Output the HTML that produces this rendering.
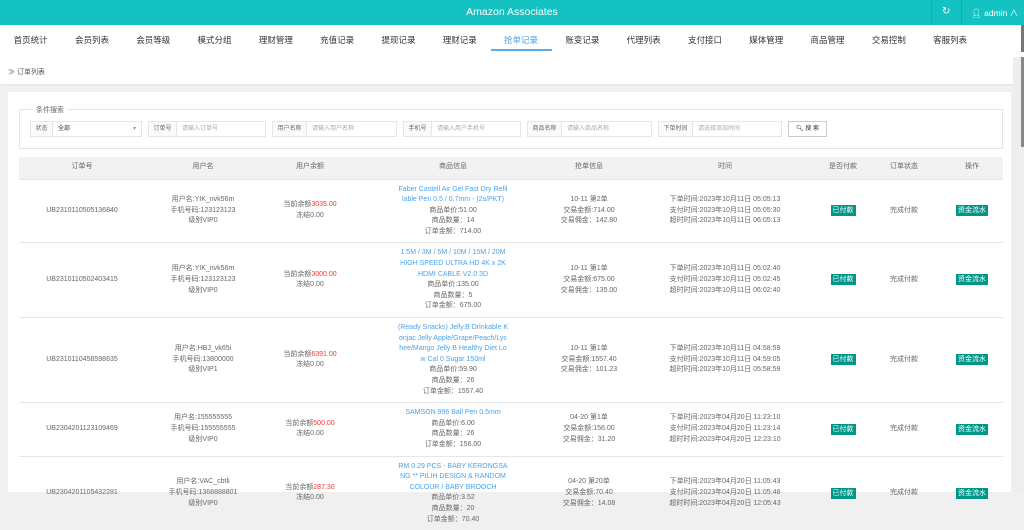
<!DOCTYPE html>
<html><head><meta charset="utf-8"><style>
*{margin:0;padding:0;box-sizing:border-box}
body{width:1024px;height:492px;overflow:hidden;background:#f0f0f0;font-family:"Liberation Sans","Noto Sans CJK SC",sans-serif;color:#666;position:relative}
.hd{position:absolute;left:0;top:0;width:1024px;height:25px;background:#14c2c1;color:#fff}
.hd .t{position:absolute;left:0;width:1024px;top:6px;text-align:center;font-size:10.5px}
.hd .d{position:absolute;top:0;width:1px;height:25px;background:#10aeae}
.nav{position:absolute;left:0;top:25px;width:1024px;height:59px;background:#fff;box-shadow:0 1px 2px rgba(0,0,0,.06)}
.nav .it{position:absolute;top:9px;width:61.3px;text-align:center;font-size:8.5px;color:#333}
.nav .on{color:#4aa3ee}
.ul{position:absolute;left:491px;top:24px;width:61px;height:2px;background:#5aaef0}
.bc{position:absolute;left:8px;top:42px;font-size:7px;color:#555}
.card{position:absolute;left:8px;top:92px;width:1003px;height:400px;background:#fff}
.sb{position:absolute;left:1013px;top:57px;width:11px;height:435px;background:#eee}
.sb2{position:absolute;left:1021px;top:57px;width:3px;height:90px;background:#888}
.fs{position:absolute;left:19px;top:109px;width:984px;height:40px;border:1px solid #e6e6e6}
.lg{position:absolute;left:33px;top:105px;background:#fff;padding:0 3px;font-size:7px;color:#666}
.fi{position:absolute;top:121px;height:16px;border:1px solid #e6e6e6;font-size:6px;color:#aaa;line-height:14px}
.fi b{display:inline-block;height:14px;background:#fafafa;border-right:1px solid #e6e6e6;font-weight:normal;color:#666;text-align:center;float:left}
.fi span{padding-left:5px}
table{position:absolute;left:19px;top:157px;width:984px;border-collapse:collapse;table-layout:fixed;font-size:7px;line-height:10.6px}
th{background:#f2f2f2;height:22px;font-weight:normal;color:#666}
td{text-align:center;padding:5px 0;border-top:1px solid #e6e6e6;white-space:nowrap;vertical-align:middle}
.r{color:#f33}.bl{color:#4aa3ee}
.pd{width:110px;margin:0 auto;white-space:normal;word-break:break-all}
.bg{display:inline-block;background:#009688;color:#fff;padding:0 2px;line-height:11px;height:11px}
</style></head><body>
<div class="hd"><div class="t">Amazon Associates</div>
<div class="d" style="left:931px"></div><div class="d" style="left:961px"></div>
<div style="position:absolute;left:942px;top:6px;font-size:10px">&#x21bb;</div>
<div style="position:absolute;left:971px;top:7px;font-size:8.5px">&#x1F464;&#xFE0E; admin &#x2227;</div></div>
<div class="nav">
<div class="it" style="left:0">首页统计</div><div class="it" style="left:61.3px">会员列表</div><div class="it" style="left:122.6px">会员等级</div><div class="it" style="left:183.9px">模式分组</div><div class="it" style="left:245.2px">理财管理</div><div class="it" style="left:306.5px">充值记录</div><div class="it" style="left:367.8px">提现记录</div><div class="it" style="left:429.1px">理财记录</div><div class="it on" style="left:490.4px">抢单记录</div><div class="it" style="left:551.7px">账变记录</div><div class="it" style="left:613px">代理列表</div><div class="it" style="left:674.3px">支付接口</div><div class="it" style="left:735.6px">媒体管理</div><div class="it" style="left:796.9px">商品管理</div><div class="it" style="left:858.2px">交易控制</div><div class="it" style="left:919.5px">客服列表</div>
<div class="ul"></div>
<div class="bc">&#x226B; 订单列表</div>
<div style="position:absolute;left:1021px;top:0;width:3px;height:27px;background:#777"></div>
</div>
<div class="sb"></div><div class="sb2"></div>
<div class="card"></div>
<div class="fs"></div><div class="lg">条件搜索</div>
<div class="fi" style="left:30px;width:112px"><b style="width:22px">状态</b><span style="color:#333">全部</span><span style="position:absolute;right:5px;color:#999">&#x25BE;</span></div>
<div class="fi" style="left:148px;width:118px"><b style="width:28px">订单号</b><span>请输入订单号</span></div>
<div class="fi" style="left:272px;width:125px"><b style="width:34px">用户名称</b><span>请输入用户名称</span></div>
<div class="fi" style="left:403px;width:118px"><b style="width:28px">手机号</b><span>请输入用户手机号</span></div>
<div class="fi" style="left:527px;width:125px"><b style="width:34px">商品名称</b><span>请输入商品名称</span></div>
<div class="fi" style="left:658px;width:124px"><b style="width:34px">下单时间</b><span>请选择添加时间</span></div>
<div class="fi" style="left:788px;width:39px;color:#333;text-align:center;border-color:#ccc">&#x1F50D;&#xFE0E; 搜 索</div>
<table>
<colgroup><col style="width:126px"><col style="width:116px"><col style="width:98px"><col style="width:188px"><col style="width:84px"><col style="width:188px"><col style="width:48px"><col style="width:74px"><col style="width:62px"></colgroup>
<tr><th>订单号</th><th>用户名</th><th>用户余额</th><th>商品信息</th><th>抢单信息</th><th>时间</th><th>是否付款</th><th>订单状态</th><th>操作</th></tr>
<tr><td>UB2310110505136840</td><td>用户名:YIK_nvk56m<br>手机号码:123123123<br>级别VIP0</td><td>当前余额<span class="r">3035.00</span><br>冻结0.00</td><td><div class="pd"><span class="bl">Faber Castell Air Gel Fast Dry Refillable Pen 0.5 / 0.7mm - (2s/PKT)</span><br>商品单价:51.00<br>商品数量：14<br>订单金额：714.00</div></td><td>10-11 第2单<br>交易金额:714.00<br>交易佣金：142.80</td><td>下单时间:2023年10月11日 05:05:13<br>支付时间:2023年10月11日 05:05:30<br>超时时间:2023年10月11日 06:05:13</td><td><span class="bg">已付款</span></td><td>完成付款</td><td><span class="bg">资金流水</span></td></tr>
<tr><td>UB2310110502403415</td><td>用户名:YIK_nvk56m<br>手机号码:123123123<br>级别VIP0</td><td>当前余额<span class="r">3000.00</span><br>冻结0.00</td><td><div class="pd"><span class="bl">1.5M / 3M / 5M / 10M / 15M / 20M HIGH SPEED ULTRA HD 4K x 2K HDMI CABLE V2.0 3D</span><br>商品单价:135.00<br>商品数量：5<br>订单金额：675.00</div></td><td>10-11 第1单<br>交易金额:675.00<br>交易佣金：135.00</td><td>下单时间:2023年10月11日 05:02:40<br>支付时间:2023年10月11日 05:02:45<br>超时时间:2023年10月11日 06:02:40</td><td><span class="bg">已付款</span></td><td>完成付款</td><td><span class="bg">资金流水</span></td></tr>
<tr><td>UB2310110458598635</td><td>用户名:HBJ_vk65i<br>手机号码:13800000<br>级别VIP1</td><td>当前余额<span class="r">6391.00</span><br>冻结0.00</td><td><div class="pd"><span class="bl">(Ready Snacks) Jelly.B Drinkable Konjac Jelly Apple/Grape/Peach/Lychee/Mango Jelly B Healthy Diet Low Cal 0 Sugar 150ml</span><br>商品单价:59.90<br>商品数量：26<br>订单金额：1557.40</div></td><td>10-11 第1单<br>交易金额:1557.40<br>交易佣金：101.23</td><td>下单时间:2023年10月11日 04:58:59<br>支付时间:2023年10月11日 04:59:05<br>超时时间:2023年10月11日 05:58:59</td><td><span class="bg">已付款</span></td><td>完成付款</td><td><span class="bg">资金流水</span></td></tr>
<tr><td>UB2304201123109469</td><td>用户名:155555555<br>手机号码:155555555<br>级别VIP0</td><td>当前余额<span class="r">500.00</span><br>冻结0.00</td><td><div class="pd"><span class="bl">SAMSON 996 Ball Pen 0.5mm</span><br>商品单价:6.00<br>商品数量：26<br>订单金额：156.00</div></td><td>04-20 第1单<br>交易金额:156.00<br>交易佣金：31.20</td><td>下单时间:2023年04月20日 11:23:10<br>支付时间:2023年04月20日 11:23:14<br>超时时间:2023年04月20日 12:23:10</td><td><span class="bg">已付款</span></td><td>完成付款</td><td><span class="bg">资金流水</span></td></tr>
<tr><td>UB2304201105432281</td><td>用户名:VAC_cbtli<br>手机号码:1368888801<br>级别VIP0</td><td>当前余额<span class="r">287.30</span><br>冻结0.00</td><td><div class="pd"><span class="bl">RM 0.29 PCS - BABY KERONGSANG ** PILIH DESIGN &amp; RANDOM COLOUR / BABY BROOCH</span><br>商品单价:3.52<br>商品数量：20<br>订单金额：70.40</div></td><td>04-20 第20单<br>交易金额:70.40<br>交易佣金：14.08</td><td>下单时间:2023年04月20日 11:05:43<br>支付时间:2023年04月20日 11:05:48<br>超时时间:2023年04月20日 12:05:43</td><td><span class="bg">已付款</span></td><td>完成付款</td><td><span class="bg">资金流水</span></td></tr>
</table>
</body></html>
